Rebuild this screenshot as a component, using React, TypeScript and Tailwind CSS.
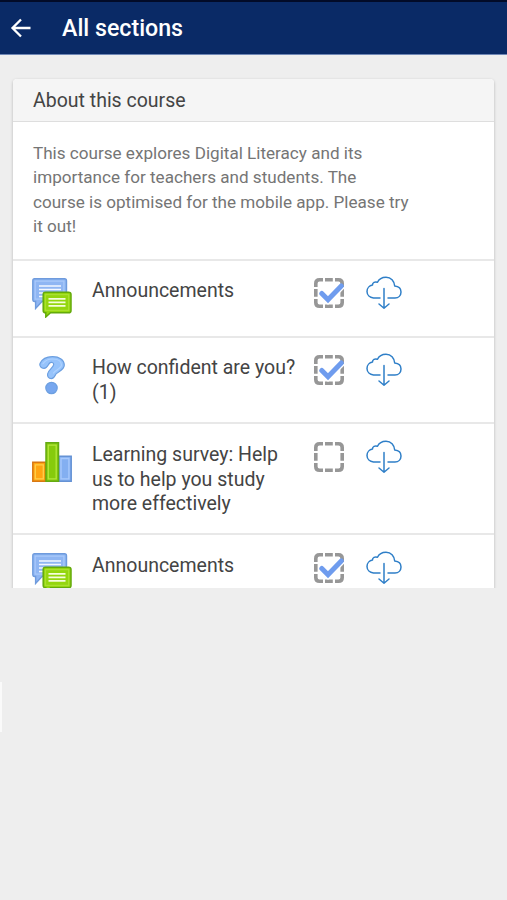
import type { ReactNode } from 'react'

function ForumIcon() {
  return (
    <svg width="40" height="40" viewBox="0 0 40 40">
      <path d="M2.5 .8h30q2 0 2 2v18.7q0 2-2 2H10L3.6 30.5V23.5H2.5q-1.7 0-1.7-2V2.8q0-2 1.7-2Z" fill="#8fb6f3" stroke="#6f9bdd" strokeWidth="1.4" />
      <path d="M3.2 3.2h28.7v18H3.2Z" fill="none" stroke="#a9c9fa" strokeWidth="1.2" />
      <path d="M7 8h22M7 11.5h22M7 15h22M7 18.5h22" stroke="#f3f8ff" strokeWidth="1.7" />
      <path d="M13.4 14.2h23.2q2.4 0 2.4 2.2v16q0 2.4-2.4 2.4H18.5L13.8 39V34.8q-2.6 0-2.6-2.4v-16q0-2.2 2.2-2.2Z" fill="#94d60e" stroke="#64aa0b" strokeWidth="1.5" />
      <path d="M13.5 16.7h23.1v15.6H13.5Z" fill="none" stroke="#a9e02f" strokeWidth="1.2" />
      <path d="M16.5 20.8h17M16.5 24.3h17M16.5 27.8h17" stroke="#f5fddc" strokeWidth="1.7" />
    </svg>
  )
}

function QuestionIcon() {
  return (
    <svg width="40" height="40" viewBox="0 0 40 40" stroke="#6c9fe0" strokeWidth="1.2" strokeLinejoin="round">
      <path d="M8 8.5C10 4 15 1.6 20.5 1.6C27.5 1.6 32.3 5 32.3 10C32.3 15 26 16.5 24 19C22.8 21 22.3 23.6 19.3 23.6C16.5 23.6 15.3 21.5 15.6 19C16 15 21.5 12.5 21.7 9.5C21.8 7.3 19 6.9 17.7 8C16 9.5 15.5 13.3 12 13.3C9.3 13.3 7 11 8 8.5Z" fill="#96c3fb" />
      <path d="M11 8.7C13.5 5.2 16.5 4 20.5 4C26 4 29.5 6.5 29.5 10C29.5 13.5 23 15 21.5 18" fill="none" stroke="#aed2ff" strokeLinecap="round" />
      <circle cx="19.5" cy="33" r="5.7" fill="#77a7ef" />
    </svg>
  )
}

function SurveyIcon() {
  return (
    <svg width="40" height="40" viewBox="0 0 40 40">
      <path d="M.8 20.3h12.7v18.9H.8Z" fill="#ffa512" stroke="#d87813" strokeWidth="1.5" />
      <path d="M3.3 22.8h8v14h-8Z" fill="none" stroke="#ffd04b" strokeWidth="1.3" />
      <path d="M26.7 14.2h12.5v25H26.7Z" fill="#83aff1" stroke="#6592d4" strokeWidth="1.5" />
      <path d="M29 16.5h7.9v20.4H29Z" fill="none" stroke="#a9cafc" strokeWidth="1.3" />
      <path d="M14 .8h12.5v38.4H14Z" fill="#86cb0c" stroke="#65aa12" strokeWidth="1.5" />
      <path d="M16.3 3.2h7.9v33.7h-7.9Z" fill="none" stroke="#b3e63d" strokeWidth="1.3" />
    </svg>
  )
}

function Completion({ done }: { done: boolean }) {
  return (
    <svg width="30" height="30" viewBox="0 0 30 30">
      <g fill="none" stroke="#979797" strokeWidth="3.6">
        <path d="M1.8 9V5.5Q1.8 1.8 5.5 1.8H9M21 1.8h3.500q3.700 0 3.700 3.700V9M28.200 21v3.500q0 3.700-3.700 3.700H21M9 28.200H5.500q-3.700 0-3.700-3.700V21" />
        <path d="M11 1.800h7.800M11 28.200h7.800M1.800 11v7.800M28.200 11v7.800" />
      </g>
      {done && (
        <>
          <path d="m7.800 15.500 6.200 6.200L27.500 8" fill="none" stroke="#fff" strokeWidth="7.500" />
          <path d="m7.800 15.500 6.200 6.200L27.300 8" fill="none" stroke="#6f9cee" strokeWidth="5" strokeLinecap="round" />
        </>
      )}
    </svg>
  )
}

function CloudDownload() {
  return (
    <svg width="36" height="34" viewBox="0 0 36 34" fill="none" stroke="#2f7fc8" strokeWidth="1.5" strokeLinecap="round" strokeLinejoin="round">
      <path d="M14 22H7.500C4 21.500 1 19 1 15.500C1 12 3.500 9.500 6.500 9C6.300 6.500 9 5.200 11.500 6.300C13 3 16 1.200 20 1.200C25 1.200 28.300 5 28.700 10C32.500 10.300 35 12.500 35 16C35 19.500 32.500 22 29 22H22" />
      <path d="M18 12.500V32M13 28l5 4.200 5-4.200" />
    </svg>
  )
}

type Activity = {
  icon: ReactNode
  name: string
  done: boolean
  className: string
}

const activities: Activity[] = [
  { icon: <ForumIcon />, name: 'Announcements', done: true, className: 'h-[77px] pt-4' },
  { icon: <QuestionIcon />, name: 'How confident are you? (1)', done: true, className: 'h-[86px] pt-4' },
  { icon: <SurveyIcon />, name: 'Learning survey: Help us to help you study more effectively', done: false, className: 'h-[111px] pt-[17px]' },
  { icon: <ForumIcon />, name: 'Announcements', done: true, className: 'h-[77px] pt-[17px]' },
]

export default function App() {
  return (
    <div className="relative h-[900px] w-full overflow-hidden bg-[#eeeeee] font-['Roboto',sans-serif]">
      <header className="flex h-[55px] items-center border-t-2 border-b border-t-[#020b28] border-b-[#6f87b5] bg-[#0a2a66] pl-[10px] text-white">
        <svg width="22" height="20" viewBox="0 0 22 20" fill="none" stroke="currentColor" strokeWidth="2.3">
          <path d="M20.500 10H2.500M11 1.500 2.500 10l8.500 8.500" />
        </svg>
        <h1 className="mt-px ml-[30px] text-[23.2px] leading-none font-medium">All sections</h1>
      </header>

      <main className="h-[533px] overflow-hidden px-[13px] pt-6">
        <section className="w-[481px] rounded-t-sm bg-white shadow-[0_1px_3px_rgba(0,0,0,0.25)]">
          <h2 className="h-[43px] rounded-t-sm border-b border-[#dedede] bg-[#f5f5f5] pl-5 text-[19.5px] leading-[43px] text-[#444]">
            About this course
          </h2>
          <p className="h-[137px] pt-[19px] pr-[82px] pl-5 text-[17.1px] leading-[24.4px] text-[#757575]">
            This course explores Digital Literacy and its importance for teachers and students. The <br />
            course is optimised for the mobile app. Please try it out!
          </p>
          <ul>
            {activities.map((activity, i) => (
              <li key={i} className={`flex items-start border-t-2 border-[#e8e8e8] pl-[19px] ${activity.className}`}>
                <div className="mt-px w-10 shrink-0">{activity.icon}</div>
                <div className="mt-[2px] ml-5 w-[208px] text-[19.5px] leading-[24.5px] text-[#444]">{activity.name}</div>
                <div className="mt-px ml-[13.5px]">
                  <Completion done={activity.done} />
                </div>
                <div className="-mt-[1.5px] ml-[22px]">
                  <CloudDownload />
                </div>
              </li>
            ))}
          </ul>
        </section>
      </main>

      {/* drawer edge */}
      <div className="absolute top-[682px] left-0 h-[50px] w-[2px] bg-[#fafafa]" />
    </div>
  )
}
